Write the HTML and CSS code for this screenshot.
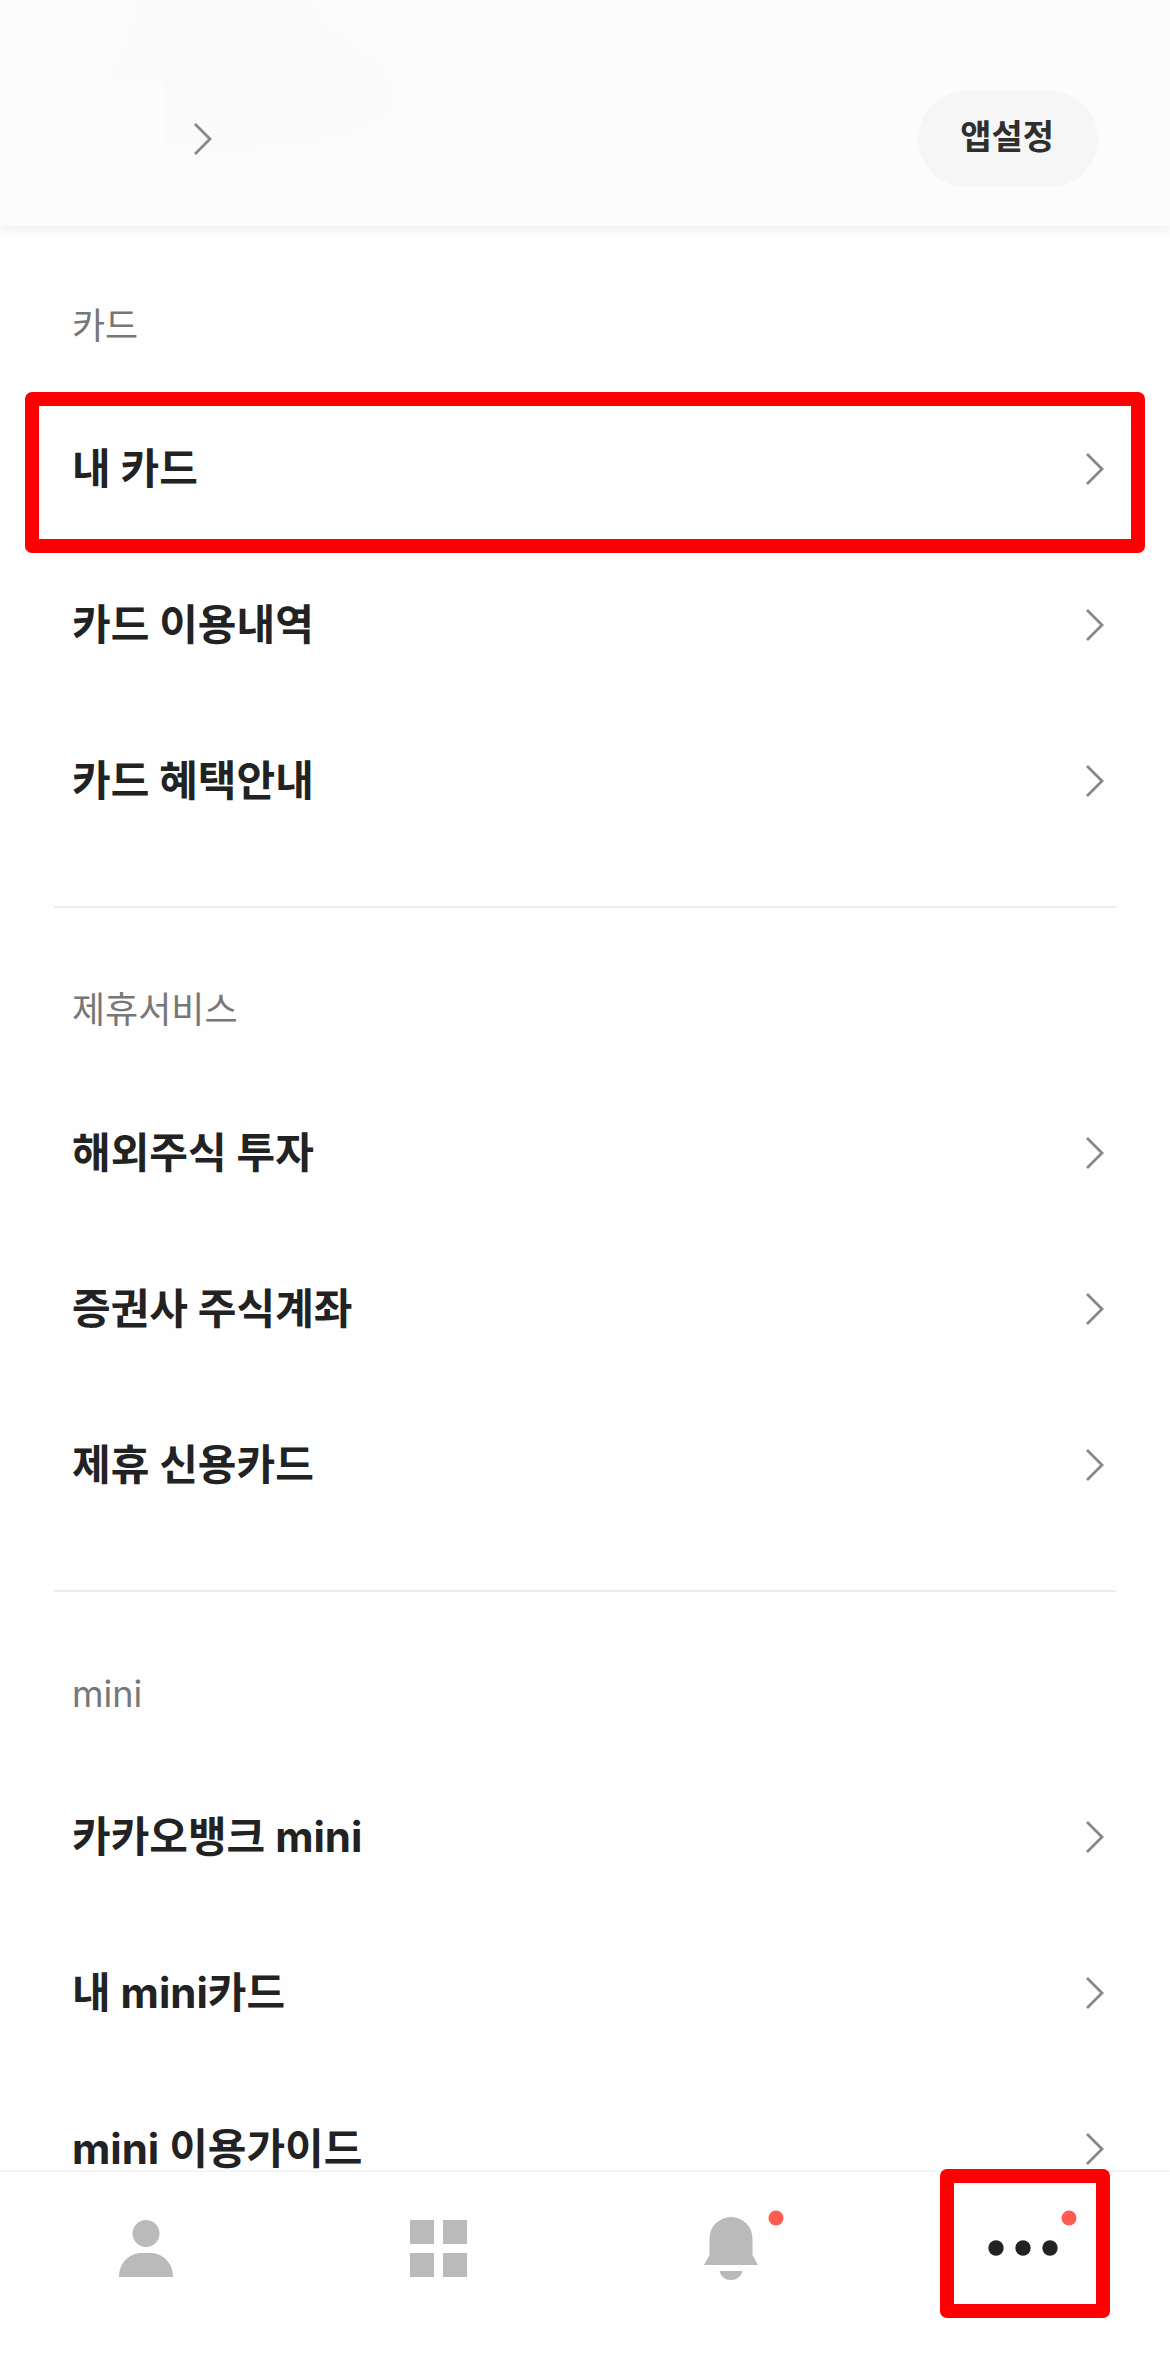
FILE: index.html
```html
<!DOCTYPE html>
<html lang="ko">
<head>
<meta charset="utf-8">
<meta name="viewport" content="width=device-width, initial-scale=1">
<title>전체 메뉴</title>
<link rel="stylesheet" href="styles.css">
</head>
<body>
<svg class="defs" aria-hidden="true">
  <symbol id="chevron" viewBox="0 0 18 32"><path d="M1 1 16 16 1 31" fill="none" stroke="#888" stroke-width="2.8"/></symbol>
</svg>
<div class="app">
  <header class="header">
    <svg class="header-haze" viewBox="0 0 480 226" aria-hidden="true">
      <path fill="#fbfbfb" d="M44 0C46 35 41 65 41 95C41 165 105 195 240 195C370 195 462 165 462 100C462 60 435 35 425 0Z"/>
      <path fill="#fafafa" d="M135 0C138 45 112 55 112 81V125C130 142 190 147 240 147C310 145 390 130 391 100C391 45 325 50 310 0Z"/>
      <path fill="#fcfcfc" d="M66 81H163V180H66Z"/>
    </svg>
    <a class="profile" href="#" aria-label="내 프로필"><svg class="chevron"><use href="#chevron"/></svg></a>
    <button class="settings" type="button">앱설정</button>
  </header>

  <main class="menu">
    <section>
      <h2 class="label">카드</h2>
      <ul class="list">
        <li class="marked"><a class="item" href="#">내 카드<svg class="chevron"><use href="#chevron"/></svg></a></li>
        <li><a class="item" href="#">카드 이용내역<svg class="chevron"><use href="#chevron"/></svg></a></li>
        <li><a class="item" href="#">카드 혜택안내<svg class="chevron"><use href="#chevron"/></svg></a></li>
      </ul>
    </section>
    <hr class="divider">
    <section>
      <h2 class="label">제휴서비스</h2>
      <ul class="list">
        <li><a class="item" href="#">해외주식 투자<svg class="chevron"><use href="#chevron"/></svg></a></li>
        <li><a class="item" href="#">증권사 주식계좌<svg class="chevron"><use href="#chevron"/></svg></a></li>
        <li><a class="item" href="#">제휴 신용카드<svg class="chevron"><use href="#chevron"/></svg></a></li>
      </ul>
    </section>
    <hr class="divider">
    <section>
      <h2 class="label">mini</h2>
      <ul class="list">
        <li><a class="item" href="#">카카오뱅크 mini<svg class="chevron"><use href="#chevron"/></svg></a></li>
        <li><a class="item" href="#">내 mini카드<svg class="chevron"><use href="#chevron"/></svg></a></li>
        <li><a class="item" href="#">mini 이용가이드<svg class="chevron"><use href="#chevron"/></svg></a></li>
      </ul>
    </section>
  </main>

  <nav class="tabs">
    <a class="tab" href="#" aria-label="홈">
      <svg class="tab-icon" viewBox="0 0 120 96"><circle cx="60" cy="33.5" r="13.5"/><path d="M33 77C33 63 43 53 56 53H64C77 53 87 63 87 77Z"/></svg>
    </a>
    <a class="tab" href="#" aria-label="상품">
      <svg class="tab-icon" viewBox="0 0 120 96"><path d="M31 20H55V44H31ZM64 20H88V44H64ZM31 53H55V77H31ZM64 53H88V77H64Z"/></svg>
    </a>
    <a class="tab" href="#" aria-label="알림">
      <svg class="tab-icon" viewBox="0 0 120 96"><path d="M38.500 38.500A21.500 21.500 0 0 1 81.500 38.500V55L87 65H33L38.500 55ZM48.500 71H71.500C70 77 65.500 80 60 80C54.500 80 50 77 48.500 71Z"/><circle class="badge" cx="105" cy="18" r="7.500"/></svg>
    </a>
    <a class="tab tab-current marked" href="#" aria-label="더보기" aria-current="page">
      <svg class="tab-icon" viewBox="0 0 120 96"><circle cx="32" cy="48" r="7.700"/><circle cx="59" cy="48" r="7.700"/><circle cx="86" cy="48" r="7.700"/><circle class="badge" cx="105" cy="18" r="7.500"/></svg>
    </a>
  </nav>
</div>
</body>
</html>
```
FILE: styles.css
```css
* { box-sizing: border-box; }

body {
  margin: 0;
  background: #fefefe;
  color: #222;
  font-family: Inter, "Noto Sans CJK KR", sans-serif;
}

a { color: inherit; text-decoration: none; }

.defs { position: absolute; width: 0; height: 0; }

.app {
  display: flex;
  flex-direction: column;
  height: 100vh;
}

/* Top bar */
.header {
  position: relative;
  z-index: 1;
  flex: none;
  display: flex;
  align-items: center;
  justify-content: space-between;
  padding: 91px 72px 39px 194px;
  background: #fcfcfc;
  box-shadow: 0 4px 10px rgba(0, 0, 0, 0.06);
}

.header-haze {
  position: absolute;
  top: 0;
  left: 0;
  width: 480px;
  height: 226px;
}

.profile { position: relative; display: flex; }

.settings {
  position: relative;
  height: 96px;
  padding: 0 44px 4px 42px;
  border: 0;
  border-radius: 48px;
  background: #f6f6f6;
  color: #2f2f2f;
  font: 700 34px/48px Inter, "Noto Sans CJK KR", sans-serif;
}

.chevron {
  flex: none;
  width: 18px;
  height: 32px;
}

/* Menu */
.menu {
  flex: 1;
  min-height: 0;
  overflow-y: auto;
  scrollbar-width: none;
}

.label {
  margin: 0;
  padding: 73px 72px 38px;
  color: #777;
  font-size: 36px;
  font-weight: 400;
  line-height: 54px;
}

.list { margin: 0; padding: 0; list-style: none; }

.item {
  display: flex;
  align-items: center;
  justify-content: space-between;
  height: 156px;
  padding: 0 66px 0 72px;
  font-size: 42px;
  font-weight: 700;
  line-height: 60px;
}

.divider {
  height: 2px;
  margin: 47px 54px 2px;
  border: 0;
  background: #ebebeb;
}

/* Bottom tabs */
.tabs {
  position: relative;
  z-index: 1;
  flex: none;
  display: grid;
  grid-template-columns: repeat(4, 1fr);
  padding-bottom: 46px;
  background: #fefefe;
  box-shadow: 0 -1px 2px rgba(0, 0, 0, 0.08);
}

.tab {
  display: flex;
  align-items: center;
  justify-content: center;
  height: 152px;
  color: #bababa;
}

.tab-current { color: #222; }

.tab-icon { width: 120px; height: 96px; fill: currentColor; }

.badge { fill: #ff5b50; }

/* Red guide frames */
.marked { position: relative; }

.marked::after {
  content: "";
  position: absolute;
  inset: 1px 25px -6px;
  border: 14px solid #f00;
  border-radius: 7px;
  pointer-events: none;
}

.tab.marked::after { inset: -3px 60px 6px 62px; }
```
